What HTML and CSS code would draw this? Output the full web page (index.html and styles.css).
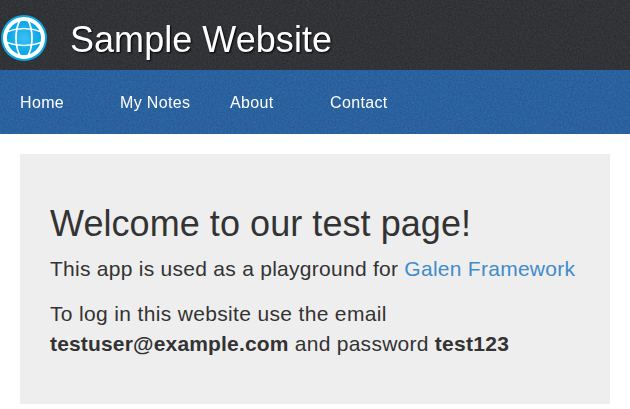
FILE: index.html
```html
<!DOCTYPE html>
<html lang="en">
<head>
<meta charset="utf-8">
<title>Sample Website</title>
<link rel="stylesheet" href="styles.css">
</head>
<body>
<header class="header">
  <svg class="texture" aria-hidden="true">
    <filter id="grain" x="0" y="0" width="100%" height="100%" color-interpolation-filters="sRGB">
      <feTurbulence type="fractalNoise" baseFrequency="0.6" numOctaves="2" seed="4" stitchTiles="stitch"/>
      <feColorMatrix values="1 0 0 0 0  1 0 0 0 0  1 0 0 0 0  0 0 0 0 1"/>
    </filter>
    <rect width="100%" height="100%" filter="url(#grain)"/>
  </svg>
  <svg class="logo" viewBox="0 0 48 48" aria-hidden="true">
    <defs>
      <radialGradient id="sea"><stop offset="0" stop-color="#3cc0f2"/><stop offset="1" stop-color="#00a3e6"/></radialGradient>
    </defs>
    <circle cx="24" cy="24" r="23" fill="#0ba6e6"/>
    <circle cx="24" cy="24" r="19" fill="url(#sea)" stroke="#fff" stroke-width="4"/>
    <g fill="none" stroke="#fff" stroke-width="1.7">
      <path d="M20.500 5C14.500 16 14.500 32 20.500 43M27.500 5C33.500 16 33.500 32 27.500 43"/>
      <path d="M6 18Q24 11 42 18M5 28Q24 35 43 28"/>
    </g>
  </svg>
  <h1 class="title">Sample Website</h1>
</header>
<nav class="menu">
  <svg class="texture" aria-hidden="true"><rect width="100%" height="100%" filter="url(#grain)"/></svg>
  <a class="item wide">Home</a><a class="item">My Notes</a><a class="item wide">About</a><a class="item">Contact</a>
</nav>
<main class="panel">
  <h1 class="welcome">Welcome to our test page!</h1>
  <p>This app is used as a playground for <a class="link">Galen Framework</a></p>
  <p><span class="intro">To log in this website use the email</span><br><b class="email">testuser@example.com</b> and password <b>test123</b></p>
</main>
</body>
</html>
```
FILE: styles.css
```css
* { box-sizing: border-box; }
body {
  margin: 0;
  background: #fff;
  color: #333;
  font-family: "Liberation Sans", Arial, sans-serif;
  overflow: hidden;
}
.header, .menu {
  position: relative;
  isolation: isolate;
  display: flex;
}
.texture {
  position: absolute;
  inset: 0;
  z-index: -1;
  width: 100%;
  height: 100%;
  mix-blend-mode: overlay;
}
.header {
  height: 70px;
  background: #323337;
}
.header .texture { opacity: .25; }
.menu .texture { opacity: .17; }
.logo {
  width: 48px;
  height: 48px;
  margin: 14px 22px 0 0;
}
.title {
  margin: 20px 0 0;
  color: #fff;
  font-size: 36px;
  font-weight: 400;
  line-height: 39.6px;
  letter-spacing: .04px;
  text-shadow: 1px 1px 2px #000;
}
.menu {
  height: 64px;
  padding: 20px;
  background: #2a619f;
}
.item {
  color: #fff;
  font-size: 16px;
  line-height: 25px;
  letter-spacing: .35px;
  width: 110px;
}
.item.wide { width: 100px; }
.panel {
  margin: 20px 20px 0;
  padding: 30px 0 30px 30px;
  height: 250px;
  background: #eee;
}
.welcome {
  margin: 20px 0 10px;
  font-size: 36px;
  font-weight: 400;
  line-height: 39.6px;
  letter-spacing: .06px;
}
.panel p {
  margin: 0 0 15px;
  font-size: 21px;
  line-height: 30px;
  letter-spacing: .27px;
  white-space: nowrap;
}
.intro { letter-spacing: .34px; }
.email { letter-spacing: .17px; }
.link { color: #428bca; }
```
